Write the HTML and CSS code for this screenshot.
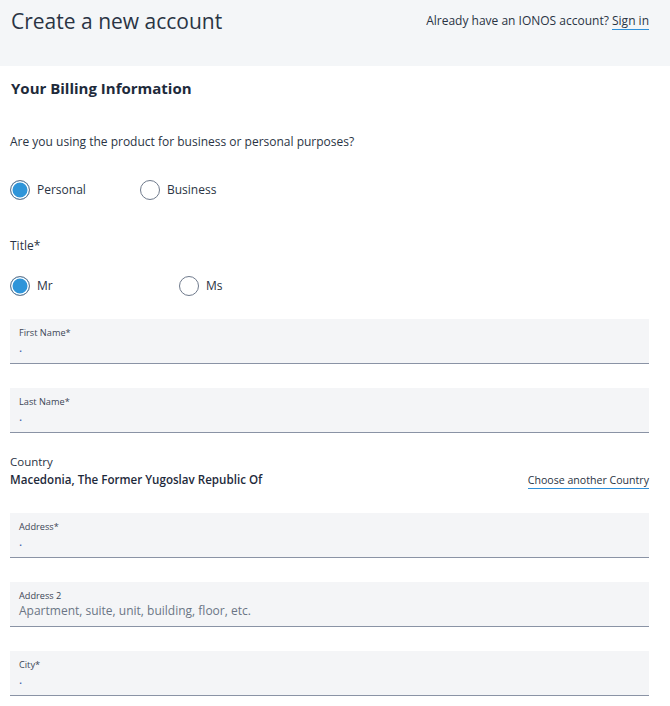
FILE: index.html
```html
<!DOCTYPE html>
<html lang="en">
<head>
<meta charset="utf-8">
<title>Create a new account</title>
<link rel="stylesheet" href="styles.css">
</head>
<body>
<header class="top">
  <h1 class="page-title">Create a new account</h1>
  <p class="signin">Already have an IONOS account? <a href="#" class="link">Sign in</a></p>
</header>
<main class="content">
  <h2 class="section-title">Your Billing Information</h2>
  <p class="question">Are you using the product for business or personal purposes?</p>
  <div class="radio-row row-purpose">
    <label class="radio"><span class="dot checked"></span><span>Personal</span></label>
    <label class="radio"><span class="dot"></span><span>Business</span></label>
  </div>
  <p class="group-label">Title*</p>
  <div class="radio-row row-title">
    <label class="radio"><span class="dot checked"></span><span>Mr</span></label>
    <label class="radio"><span class="dot"></span><span>Ms</span></label>
  </div>
  <div class="field first">
    <span class="field-label">First Name*</span>
    <span class="field-value">.</span>
  </div>
  <div class="field">
    <span class="field-label">Last Name*</span>
    <span class="field-value">.</span>
  </div>
  <div class="country">
    <span class="country-label">Country</span>
    <div class="country-row">
      <span class="country-value">Macedonia, The Former Yugoslav Republic Of</span>
      <a href="#" class="link small">Choose another Country</a>
    </div>
  </div>
  <div class="field after-country">
    <span class="field-label">Address*</span>
    <span class="field-value">.</span>
  </div>
  <div class="field">
    <span class="field-label">Address 2</span>
    <span class="field-value placeholder">Apartment, suite, unit, building, floor, etc.</span>
  </div>
  <div class="field">
    <span class="field-label">City*</span>
    <span class="field-value">.</span>
  </div>
</main>
</body>
</html>
```
FILE: styles.css
```css
* { box-sizing: border-box; }
html, body { margin: 0; padding: 0; background: #fff; }
body {
  font-family: "Open Sans", "Noto Sans", sans-serif;
  color: #2a3444;
  font-size: 12px;
}
.top {
  background: #f4f6f8;
  height: 66px;
  display: flex;
  justify-content: space-between;
  align-items: flex-start;
  padding: 0 21px 0 11px;
}
.page-title {
  margin: 4px 0 0;
  font-size: 21px;
  font-weight: 400;
  line-height: 34px;
  color: #2a3444;
}
.signin {
  margin: 11px 0 0;
  font-size: 12px;
  line-height: 20px;
  color: #2a3444;
}
.link {
  color: #2a3444;
  text-decoration: none;
  border-bottom: 1.5px solid #2e8fd8;
}
.content {
  padding: 0 21px 0 10px;
}
.section-title {
  margin: 11px 0 0 1px;
  font-size: 15px;
  font-weight: 700;
  line-height: 22px;
  color: #1e2a3b;
}
.question {
  margin: 33px 0 0;
  line-height: 20px;
}
.radio-row {
  display: flex;
  height: 20px;
  margin-top: 28px;
}
.row-title { margin-top: 20px; }
.radio {
  display: flex;
  align-items: center;
  gap: 7px;
  line-height: 20px;
}
.row-purpose .radio:first-child { width: 130px; }
.row-title .radio:first-child { width: 169px; }
.dot {
  width: 20px;
  height: 20px;
  border-radius: 50%;
  border: 1.5px solid #6f7a8c;
  background: #fff;
  display: inline-block;
  flex: none;
}
.dot.checked {
  background: #2f95d9;
  box-shadow: inset 0 0 0 1.5px #fff;
}
.group-label {
  margin: 36px 0 0;
  line-height: 20px;
}
.field {
  background: #f4f5f7;
  border-bottom: 1px solid #8a93a5;
  height: 45px;
  padding: 8px 9px 0;
  margin-top: 24px;
  display: flex;
  flex-direction: column;
}
.field.first { margin-top: 23px; }
.field.after-country { margin-top: 25px; }
.field-label {
  font-size: 9.2px;
  line-height: 12px;
  color: #3b4556;
}
.field-value {
  font-size: 12px;
  line-height: 18px;
  color: #3a5ba8;
}
.field-value.placeholder { color: #6b7585; }
.country { margin-top: 21px; }
.country-label {
  display: block;
  font-size: 11.5px;
  line-height: 16px;
}
.country-row {
  display: flex;
  justify-content: space-between;
  align-items: center;
  height: 18px;
}
.country-value {
  font-size: 11.6px;
  font-weight: 600;
  color: #1e2a3b;
}
.link.small {
  font-size: 10.6px;
  line-height: 15px;
  margin-top: 4px;
}
```
